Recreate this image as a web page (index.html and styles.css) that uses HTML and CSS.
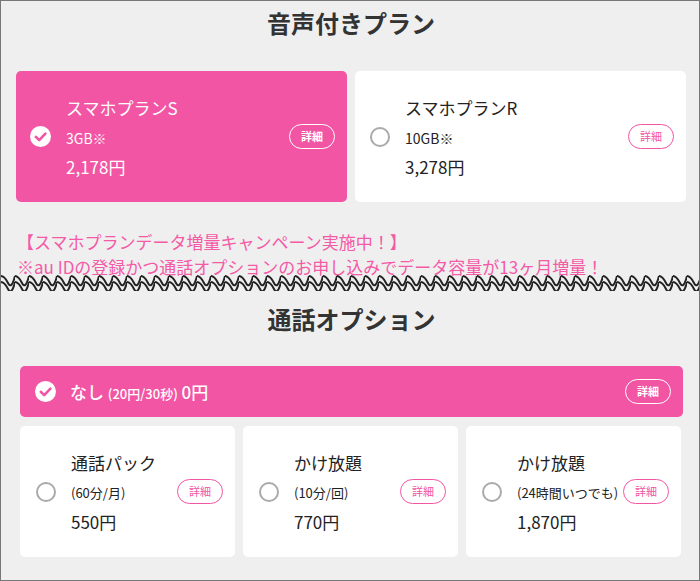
FILE: index.html
```html
<!DOCTYPE html>
<html lang="ja">
<head>
  <meta charset="UTF-8">
  <meta name="viewport" content="width=device-width, initial-scale=1.0">
  <title>料金プラン</title>
  <link rel="stylesheet" href="styles.css">
</head>
<body>
  <div class="page">

    <!-- 音声付きプラン -->
    <section class="plans">
      <h2 class="section-title">音声付きプラン</h2>
      <div class="plan-grid">
        <div class="plan-card selected">
          <svg class="check" viewBox="0 0 21 21" width="21" height="21">
            <circle cx="10.5" cy="10.5" r="10.5" fill="#fff"/>
            <path d="M5.8 10.8 L9.2 14.1 L15.4 7.6" fill="none" stroke="#f255a3" stroke-width="2.6" stroke-linecap="round" stroke-linejoin="round"/>
          </svg>
          <div class="plan-text">
            <div class="name">スマホプランS</div>
            <div class="sub">3GB※</div>
            <div class="price">2,178円</div>
          </div>
          <span class="detail">詳細</span>
        </div>
        <div class="plan-card">
          <span class="radio"></span>
          <div class="plan-text">
            <div class="name">スマホプランR</div>
            <div class="sub">10GB※</div>
            <div class="price">3,278円</div>
          </div>
          <span class="detail">詳細</span>
        </div>
      </div>

      <p class="campaign">
        【スマホプランデータ増量キャンペーン実施中！】<br>
        ※au IDの登録かつ通話オプションのお申し込みでデータ容量が13ヶ月増量！
      </p>
    </section>

    <!-- wavy divider -->
    <svg class="wave" width="100%" height="18">
      <defs>
        <pattern id="zig" width="14" height="18" patternUnits="userSpaceOnUse">
          <path d="M0 3 Q3.5 3 7 10 T14 3" fill="none" stroke="#222" stroke-width="2"/>
          <path d="M0 9 Q3.5 9 7 16 T14 9" fill="none" stroke="#222" stroke-width="2"/>
        </pattern>
      </defs>
      <rect width="100%" height="18" fill="url(#zig)"/>
    </svg>

    <!-- 通話オプション -->
    <section class="options">
      <h2 class="section-title">通話オプション</h2>
      <div class="option-bar">
        <svg class="check" viewBox="0 0 21 21" width="21" height="21">
          <circle cx="10.5" cy="10.5" r="10.5" fill="#fff"/>
          <path d="M5.8 10.8 L9.2 14.1 L15.4 7.6" fill="none" stroke="#f255a3" stroke-width="2.6" stroke-linecap="round" stroke-linejoin="round"/>
        </svg>
        <div class="bar-text">なし <small>(20円/30秒)</small> 0円</div>
        <span class="detail">詳細</span>
      </div>
      <div class="option-grid">
        <div class="plan-card">
          <span class="radio"></span>
          <div class="plan-text">
            <div class="name">通話パック</div>
            <div class="sub">(60分/月)</div>
            <div class="price">550円</div>
          </div>
          <span class="detail">詳細</span>
        </div>
        <div class="plan-card">
          <span class="radio"></span>
          <div class="plan-text">
            <div class="name">かけ放題</div>
            <div class="sub">(10分/回)</div>
            <div class="price">770円</div>
          </div>
          <span class="detail">詳細</span>
        </div>
        <div class="plan-card">
          <span class="radio"></span>
          <div class="plan-text">
            <div class="name">かけ放題</div>
            <div class="sub">(24時間いつでも)</div>
            <div class="price">1,870円</div>
          </div>
          <span class="detail">詳細</span>
        </div>
      </div>
    </section>

  </div>
</body>
</html>
```

FILE: styles.css
```css
body {
  margin: 0;
  padding: 0;
  font-family: "Noto Sans CJK JP", "Noto Sans", sans-serif;
  color: #222;
}

.page {
  width: 700px;
  height: 581px;
  box-sizing: border-box;
  border: 1px solid #777;
  background: #efefef;
  overflow: hidden;
}

/* Headings */
.section-title {
  margin: 0;
  font-size: 24px;
  line-height: 44px;
  font-weight: bold;
  text-align: center;
  color: #333;
}

/* Plans */
.plans {
  padding: 0 13px 0 15px;
}

.plan-grid {
  display: grid;
  grid-template-columns: 1fr 1fr;
  gap: 8px;
  margin-top: 26px;
}

.plan-card {
  display: flex;
  align-items: center;
  height: 131px;
  box-sizing: border-box;
  padding: 0 12px 0 14px;
  background: #fff;
  border-radius: 5px;
}

.plan-card.selected {
  background: #f255a3;
  color: #fff;
}

.check {
  flex: none;
  display: block;
}

.radio {
  flex: none;
  width: 20px;
  height: 20px;
  box-sizing: border-box;
  border: 2.5px solid #aaa;
  border-radius: 50%;
  margin-left: 1px;
}

.plan-text {
  flex: 1;
  margin-left: 15px;
  white-space: nowrap;
}

.plan-text .name {
  font-size: 17px;
  line-height: 30px;
}

.plan-text .sub {
  font-size: 14px;
  line-height: 30px;
}

.plan-text .price {
  font-size: 17px;
  line-height: 28px;
}

.detail {
  flex: none;
  width: 46px;
  height: 25px;
  box-sizing: border-box;
  border: 1.5px solid #f255a3;
  border-radius: 13px;
  color: #f255a3;
  font-size: 11px;
  line-height: 22px;
  text-align: center;
}

.selected .detail,
.option-bar .detail {
  border-color: #fff;
  color: #fff;
  font-weight: bold;
}

/* Campaign notice */
.campaign {
  margin: 27px 0 0 1px;
  font-size: 17px;
  line-height: 25px;
  color: #f45aa6;
}

.wave {
  display: block;
  margin-top: -6px;
}

/* Call options */
.options {
  padding: 6px 16px 0 19px;
}

.option-bar {
  display: flex;
  align-items: center;
  height: 51px;
  margin-top: 25px;
  padding: 0 12px 0 15px;
  background: #f255a3;
  border-radius: 5px;
  color: #fff;
}

.bar-text {
  flex: 1;
  margin-left: 14px;
  font-size: 17px;
  font-weight: 500;
}

.bar-text small {
  font-size: 13px;
}

.option-grid {
  display: grid;
  grid-template-columns: repeat(3, 1fr);
  gap: 8px;
  margin: 9px 2px 0 0;
}

.option-grid .plan-card {
  padding: 0 12px 0 15px;
}

.option-grid .plan-text .sub {
  font-size: 13px;
}
```
